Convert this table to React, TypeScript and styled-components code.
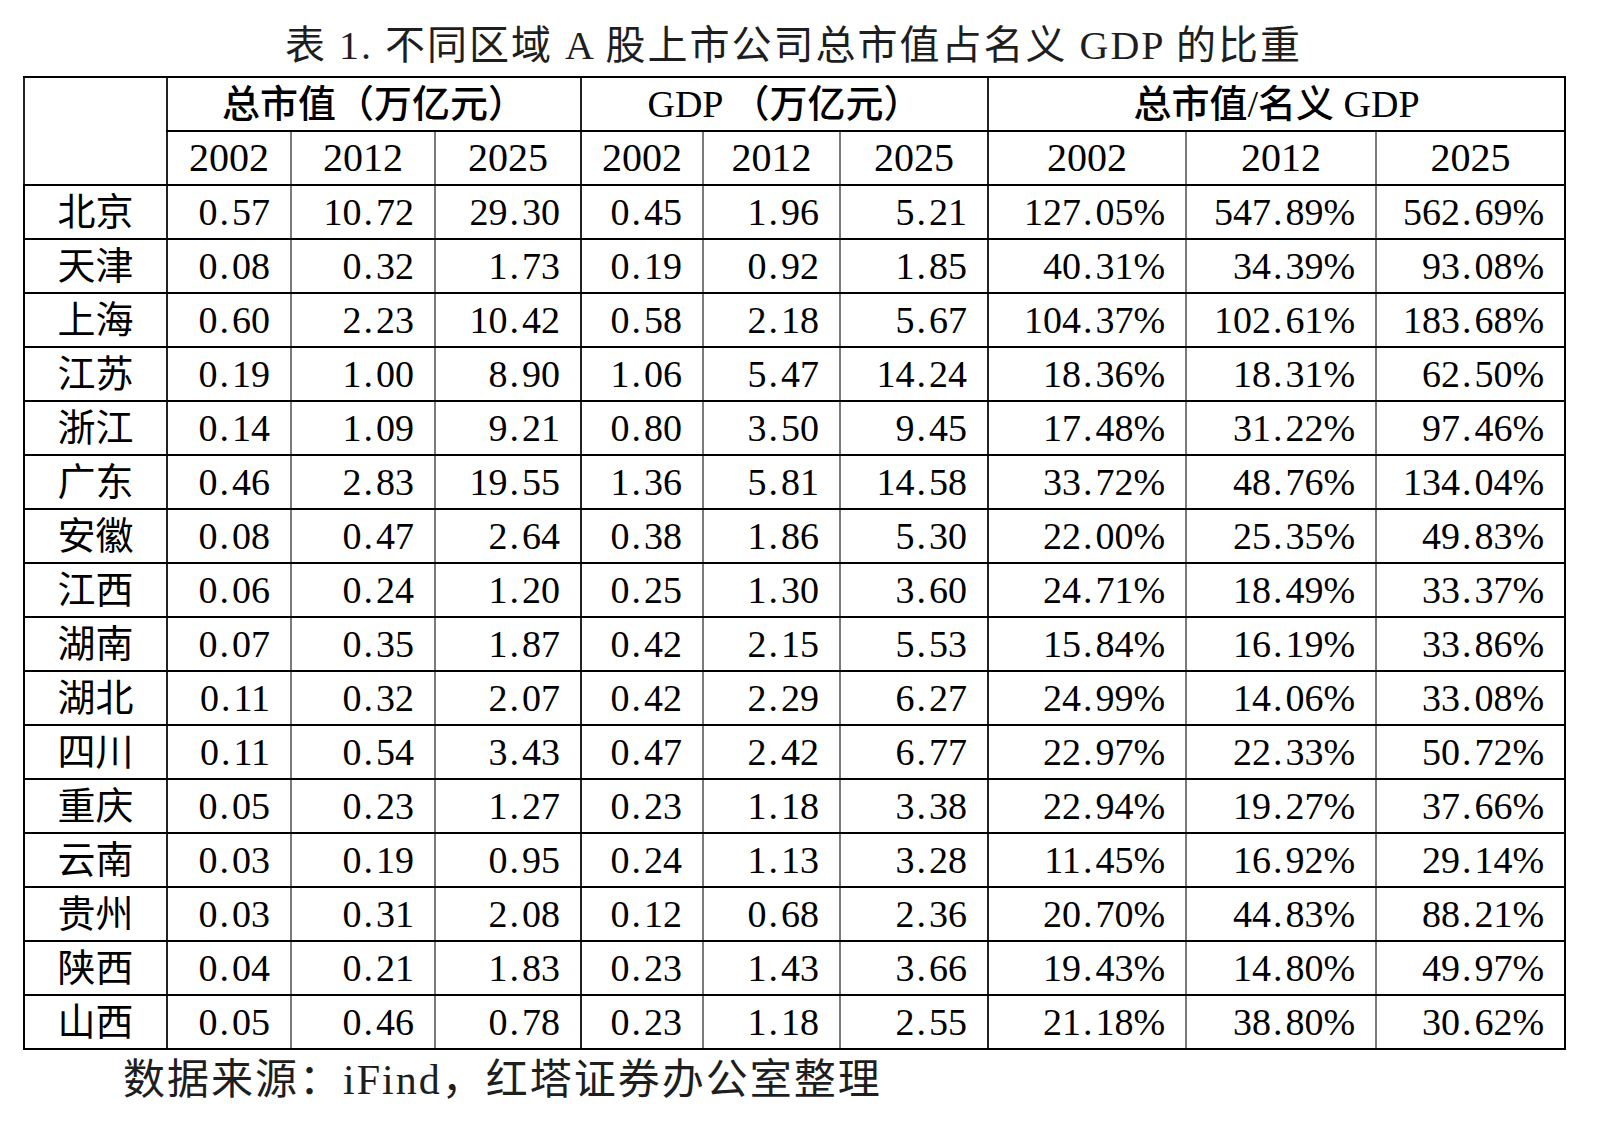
import React from "react";
import styled, { createGlobalStyle } from "styled-components";

const GlobalStyle = createGlobalStyle`
  html, body {
    margin: 0;
    padding: 0;
    background: #ffffff;
  }
  body {
    font-family: "Liberation Serif", "Noto Sans CJK SC", serif;
    color: #000;
  }
`;

const Page = styled.div`
  width: 1602px;
  height: 1122px;
  padding: 22px 0 0 23px;
  box-sizing: border-box;
`;

const Title = styled.div`
  width: 1541px;
  text-align: center;
  font-size: 40px;
  line-height: 48px;
  height: 48px;
  letter-spacing: 2px;
  color: #1e1e1e;
  margin-bottom: 6px;
  white-space: nowrap;
`;

const Table = styled.table`
  width: 1541px;
  table-layout: fixed;
  border-collapse: collapse;
  border: 2px solid #000;
`;

const Row = styled.tr`
  height: 54px;
`;

const HeadCell = styled.th<{ $group?: boolean; $size?: number }>`
  height: 52px;
  box-sizing: border-box;
  border-top: 2px solid #000;
  border-bottom: 2px solid #000;
  border-left: 2px solid ${({ $group }) => ($group ? "#222" : "#7a7a7a")};
  padding: 0;
  font-weight: 500;
  font-size: ${({ $size }) => $size ?? 38}px;
  line-height: 40px;
  text-align: center;
  vertical-align: middle;
  white-space: nowrap;
`;

const NameCell = styled.td`
  height: 52px;
  border-top: 2px solid #000;
  border-bottom: 2px solid #000;
  padding: 0;
  font-size: 38px;
  line-height: 40px;
  text-align: center;
  vertical-align: middle;
`;

const NumCell = styled.td<{ $group?: boolean }>`
  height: 52px;
  border-top: 2px solid #000;
  border-bottom: 2px solid #000;
  border-left: 2px solid ${({ $group }) => ($group ? "#222" : "#7a7a7a")};
  padding: 0 20px 0 0;
  font-size: 38px;
  line-height: 40px;
  text-align: right;
  vertical-align: middle;
  white-space: nowrap;
`;

const Dot = styled.span`
  margin: 0 3px 0 2px;
`;

const Footer = styled.div`
  padding: 4px 0 0 100px;
  font-size: 42px;
  line-height: 52px;
  letter-spacing: 2px;
  color: #1e1e1e;
  white-space: nowrap;
`;

const widths = [143, 124, 144, 146, 122, 137, 148, 198, 190, 189];
const years = ["2002", "2012", "2025"];
const groupStarts = [1, 4, 7];

const rows: string[][] = [
  ["北京", "0.57", "10.72", "29.30", "0.45", "1.96", "5.21", "127.05%", "547.89%", "562.69%"],
  ["天津", "0.08", "0.32", "1.73", "0.19", "0.92", "1.85", "40.31%", "34.39%", "93.08%"],
  ["上海", "0.60", "2.23", "10.42", "0.58", "2.18", "5.67", "104.37%", "102.61%", "183.68%"],
  ["江苏", "0.19", "1.00", "8.90", "1.06", "5.47", "14.24", "18.36%", "18.31%", "62.50%"],
  ["浙江", "0.14", "1.09", "9.21", "0.80", "3.50", "9.45", "17.48%", "31.22%", "97.46%"],
  ["广东", "0.46", "2.83", "19.55", "1.36", "5.81", "14.58", "33.72%", "48.76%", "134.04%"],
  ["安徽", "0.08", "0.47", "2.64", "0.38", "1.86", "5.30", "22.00%", "25.35%", "49.83%"],
  ["江西", "0.06", "0.24", "1.20", "0.25", "1.30", "3.60", "24.71%", "18.49%", "33.37%"],
  ["湖南", "0.07", "0.35", "1.87", "0.42", "2.15", "5.53", "15.84%", "16.19%", "33.86%"],
  ["湖北", "0.11", "0.32", "2.07", "0.42", "2.29", "6.27", "24.99%", "14.06%", "33.08%"],
  ["四川", "0.11", "0.54", "3.43", "0.47", "2.42", "6.77", "22.97%", "22.33%", "50.72%"],
  ["重庆", "0.05", "0.23", "1.27", "0.23", "1.18", "3.38", "22.94%", "19.27%", "37.66%"],
  ["云南", "0.03", "0.19", "0.95", "0.24", "1.13", "3.28", "11.45%", "16.92%", "29.14%"],
  ["贵州", "0.03", "0.31", "2.08", "0.12", "0.68", "2.36", "20.70%", "44.83%", "88.21%"],
  ["陕西", "0.04", "0.21", "1.83", "0.23", "1.43", "3.66", "19.43%", "14.80%", "49.97%"],
  ["山西", "0.05", "0.46", "0.78", "0.23", "1.18", "2.55", "21.18%", "38.80%", "30.62%"],
];

function Num({ value }: { value: string }) {
  const [whole, rest] = value.split(".");
  return (
    <>
      {whole}
      <Dot>.</Dot>
      {rest}
    </>
  );
}

export default function App() {
  return (
    <Page>
      <GlobalStyle />
      <Title>表 1. 不同区域 A 股上市公司总市值占名义 GDP 的比重</Title>

      <Table>
        <colgroup>
          {widths.map((w, i) => (
            <col key={i} style={{ width: w }} />
          ))}
        </colgroup>
        <thead>
          <Row>
            <HeadCell rowSpan={2} $group />
            <HeadCell colSpan={3} $group>
              总市值（万亿元）
            </HeadCell>
            <HeadCell colSpan={3} $group>
              GDP （万亿元）
            </HeadCell>
            <HeadCell colSpan={3} $group>
              总市值/名义 GDP
            </HeadCell>
          </Row>
          <Row>
            {[0, 1, 2].map((g) =>
              years.map((y, j) => (
                <HeadCell key={`${g}-${y}`} $group={j === 0} $size={40}>
                  {y}
                </HeadCell>
              ))
            )}
          </Row>
        </thead>
        <tbody>
          {rows.map(([name, ...values]) => (
            <Row key={name}>
              <NameCell>{name}</NameCell>
              {values.map((v, i) => (
                <NumCell key={i} $group={groupStarts.includes(i + 1)}>
                  <Num value={v} />
                </NumCell>
              ))}
            </Row>
          ))}
        </tbody>
      </Table>

      <Footer>数据来源：iFind，红塔证券办公室整理</Footer>
    </Page>
  );
}
